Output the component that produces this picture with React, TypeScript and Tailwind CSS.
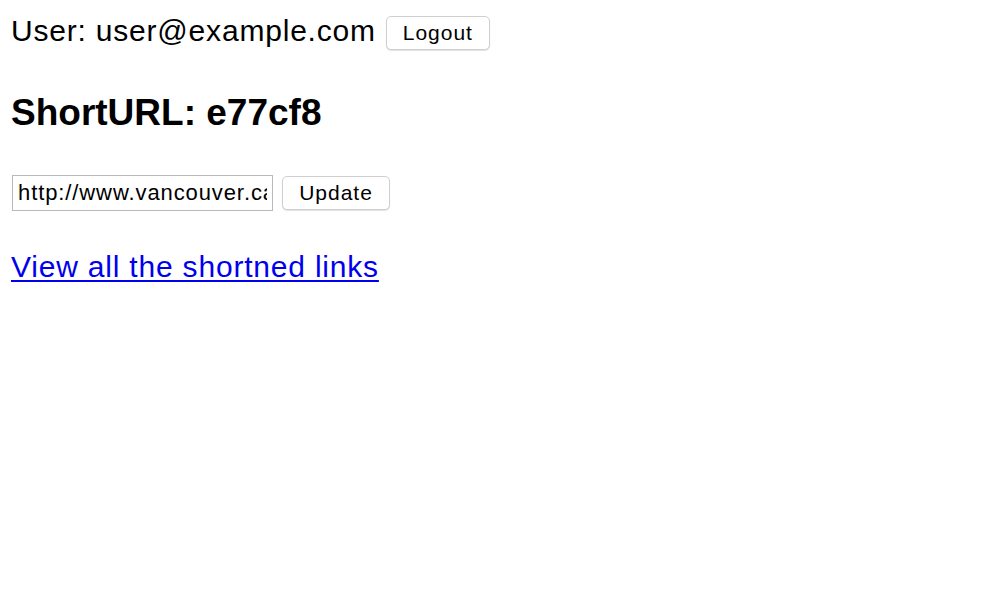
import React, { useState } from "react";

const App: React.FC = () => {
  const [longUrl, setLongUrl] = useState("http://www.vancouver.ca");
  return (
    <div className="min-h-screen bg-white pl-[11px] pt-[14px] font-['Liberation_Sans',Arial,sans-serif] text-black">
      <div className="flex items-start">
        <span className="text-[30px] leading-[34px] tracking-[0.8px]">User: user@example.com</span>
        <button className="ml-[10px] mt-[2px] h-[34px] w-[104px] rounded-[5px] border border-[#cfcfcf] bg-white text-[21px] tracking-[1px] shadow-[0_1px_1px_rgba(0,0,0,0.12)]">
          Logout
        </button>
      </div>
      <h3 className="mt-[42px] text-[37px] font-bold leading-[42px]">ShortURL: e77cf8</h3>
      <form
        className="mt-[41px] flex items-start"
        onSubmit={(e) => {
          e.preventDefault();
        }}
      >
        <input
          type="text"
          value={longUrl}
          onChange={(e) => setLongUrl(e.target.value)}
          className="ml-px h-[36px] w-[261px] border border-[#b9b9b9] px-[5px] text-[22px] tracking-[0.9px] outline-none"
        />
        <button
          type="submit"
          className="ml-[9px] mt-px h-[34px] w-[108px] rounded-[5px] border border-[#cfcfcf] bg-white text-[21px] tracking-[1px] shadow-[0_1px_1px_rgba(0,0,0,0.12)]"
        >
          Update
        </button>
      </form>
      <a
        href="#"
        className="mt-[39px] block w-fit text-[30px] leading-[34px] tracking-[0.8px] text-[#0000ee] underline decoration-2 underline-offset-[3px]"
      >
        View all the shortned links
      </a>
    </div>
  );
};

export default App;
